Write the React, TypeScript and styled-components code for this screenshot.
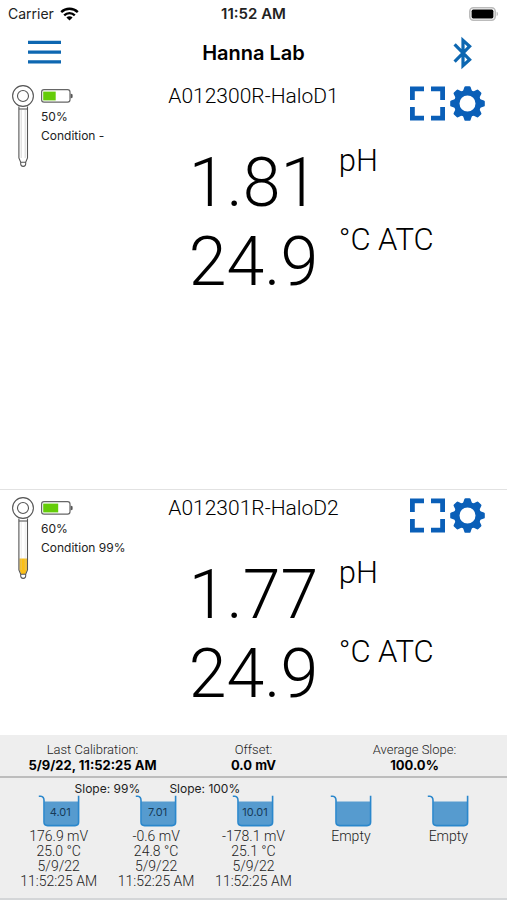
import React from "react";
import styled, { createGlobalStyle } from "styled-components";

const BLUE = "#0a5fb8";
const LIGHT_FONT = 'Roboto, "Liberation Sans", sans-serif';
const UI_FONT = 'Inter, "Liberation Sans", sans-serif';

const GlobalStyle = createGlobalStyle`
  *, *::before, *::after { box-sizing: border-box; }
  body {
    margin: 0;
    background: #fff;
    color: #000;
    font-family: ${UI_FONT};
  }
  p, h1, h2, dl, dd, dt, ul { margin: 0; padding: 0; }
`;

const Screen = styled.div`
  display: flex;
  flex-direction: column;
  min-height: 100vh;
`;

const Split = styled.div`
  display: grid;
  grid-template-columns: minmax(0, 1fr) auto minmax(0, 1fr);
  align-items: center;
`;

const StatusBar = styled(Split)`
  height: 28px;
  padding: 0 8px;
  font-size: 14px;
  line-height: 20px;
`;

const Carrier = styled.span`
  display: flex;
  align-items: center;
  gap: 6px;
  color: #222;
`;

const Clock = styled.span`
  font-size: 15px;
  font-weight: 600;
  color: #222;
`;

const AtEnd = styled.span`
  display: flex;
  justify-content: flex-end;
`;

const NavBar = styled(Split)`
  height: 50px;
  padding: 0 28px;
`;

const NavEnd = styled(AtEnd)`
  padding-right: 6px;
`;

const Title = styled.h1`
  font-size: 20px;
  line-height: 24px;
  font-weight: 600;
`;

const IconButton = styled.button`
  display: flex;
  padding: 0;
  border: 0;
  background: none;
  color: ${BLUE};
  cursor: pointer;
`;

const Device = styled.section<{ $divided?: boolean }>`
  flex: 1 1 0;
  display: flex;
  flex-direction: column;
  border-top: ${(p) => (p.$divided ? "1px solid #e2e2e2" : "0")};
`;

const DeviceBody = styled.div`
  flex: 1;
  display: grid;
  grid-template-columns: minmax(0, 1fr) minmax(170px, auto) minmax(0, 1fr);
  grid-template-rows: 66px 79px 79px;
  padding-top: 5px;
`;

const Info = styled.div`
  grid-column: 1;
  grid-row: 1 / span 3;
  display: flex;
  align-items: flex-start;
  gap: 7px;
  padding: 1px 0 0 12px;
`;

const InfoText = styled.div`
  display: flex;
  flex-direction: column;
  gap: 3px;
  padding-top: 5px;
  font-size: 12px;
  line-height: 16px;
  color: #222;
  white-space: nowrap;
  svg { margin-bottom: 3px; }
`;

const DeviceName = styled.h2`
  grid-column: 2;
  grid-row: 1;
  font-family: ${LIGHT_FONT};
  font-size: 21px;
  line-height: 26px;
  font-weight: 300;
  text-align: center;
`;

const Actions = styled.div`
  grid-column: 3;
  grid-row: 1;
  display: flex;
  justify-content: flex-end;
  align-items: flex-start;
  gap: 5px;
  padding: 3px 22px 0 0;
`;

const Value = styled.p<{ $row: number }>`
  grid-column: 2;
  grid-row: ${(p) => p.$row};
  font-family: ${LIGHT_FONT};
  font-size: 68px;
  line-height: 68px;
  font-weight: 300;
  text-align: center;
`;

const Unit = styled.p<{ $row: number }>`
  grid-column: 3;
  grid-row: ${(p) => p.$row};
  font-family: ${LIGHT_FONT};
  font-size: 31px;
  line-height: 24px;
  font-weight: 300;
  white-space: nowrap;
`;

const Calibration = styled.div`
  background: #eeeeee;
  border-bottom: 2px solid #d4d6d8;
  font-family: ${LIGHT_FONT};
  font-size: 14px;
  line-height: 15px;
  color: #222;
`;

const Summary = styled.dl`
  display: grid;
  grid-template-columns: repeat(3, 1fr);
  padding: 7px 12px 3px;
  border-bottom: 2px solid #bdbdbd;
  font-size: 13px;
  text-align: center;
  dt { font-weight: 300; }
  dd {
    font-family: ${UI_FONT};
    font-weight: 700;
    line-height: 16px;
    color: #000;
  }
`;

const Slopes = styled.div`
  display: grid;
  grid-template-columns: repeat(10, 1fr);
  height: 17px;
  padding: 3px 10px 0;
  font-family: ${UI_FONT};
  font-size: 12px;
  text-align: center;
  white-space: nowrap;
`;

const Slope = styled.span<{ $from: number }>`
  grid-column: ${(p) => p.$from} / span 2;
`;

const Buffers = styled.ul`
  display: grid;
  grid-template-columns: repeat(5, 1fr);
  min-height: 103px;
  padding: 0 10px;
  list-style: none;
`;

const Buffer = styled.li`
  display: flex;
  flex-direction: column;
  align-items: center;
  font-weight: 300;
  white-space: nowrap;
`;

const Beaker = styled.div`
  display: grid;
  place-items: center;
  margin-bottom: 2px;
  > * { grid-area: 1 / 1; }
`;

const BeakerLabel = styled.span`
  padding: 2px 0 0 3px;
  font-family: ${UI_FONT};
  font-size: 11px;
  font-weight: 400;
  color: #173a57;
`;

function WifiIcon() {
  return (
    <svg width="19" height="14" viewBox="0 0 19 14" fill="none" stroke="#000" aria-hidden="true">
      <path d="M1.2 5.2a11.8 11.8 0 0 1 16.6 0" strokeWidth="2.4" />
      <path d="M4.2 8.4a7.5 7.5 0 0 1 10.6 0" strokeWidth="2.3" />
      <path d="M9.5 13.6 6.4 10.5a4.4 4.4 0 0 1 6.2 0z" fill="#000" stroke="none" />
    </svg>
  );
}

function PhoneBattery() {
  return (
    <svg width="30" height="14" viewBox="0 0 30 14" aria-hidden="true">
      <rect x="0.8" y="0.8" width="25.4" height="12.4" rx="3.6" fill="#fff" stroke="#bbb" strokeWidth="1.6" />
      <rect x="2.6" y="2.6" width="21.8" height="8.8" rx="1.6" fill="#000" />
      <path d="M27.6 4.8c1.8.6 1.8 3.8 0 4.4z" fill="#bbb" />
    </svg>
  );
}

function MenuIcon() {
  return (
    <svg width="33" height="26" viewBox="0 0 33 26" fill="#0d67b1" aria-hidden="true">
      <path d="M0 .8h33v3.3H0zM0 10.4h33v3.3H0zM0 20.2h33v3.3H0z" />
    </svg>
  );
}

function BluetoothIcon() {
  return (
    <svg width="20" height="34" viewBox="0 0 20 34" fill="none" stroke="#0d67b1" strokeWidth="3.2" aria-hidden="true">
      <path d="M1.6 8.4 16.6 23.6 10 29.6V4.4l6.6 6L1.6 25.6" />
    </svg>
  );
}

function ExpandIcon() {
  return (
    <svg width="35" height="35" viewBox="0 0 35 35" fill="none" stroke={BLUE} strokeWidth="4.8" aria-hidden="true">
      <path d="M2.4 14V2.9H14M21 2.9h11.6V14M32.6 21v11.1H21M14 32.1H2.4V21" />
    </svg>
  );
}

function GearIcon() {
  return (
    <svg width="35" height="35" viewBox="-17.5 -17.5 35 35" fill={BLUE} aria-hidden="true">
      <circle r="10.8" fill="none" stroke={BLUE} strokeWidth="5.6" />
      {[0, 45, 90, 135, 180, 225, 270, 315].map((angle) => (
        <path
          key={angle}
          d="M-4.8-11.4-3.1-16.4Q-2.8-17.3-1.9-17.3H1.9Q2.8-17.3 3.1-16.4L4.8-11.4z"
          transform={`rotate(${angle})`}
        />
      ))}
    </svg>
  );
}

function ProbeIcon({ filled }: { filled?: boolean }) {
  return (
    <svg width="22" height="84" viewBox="0 0 22 84" fill="none" stroke="#555" strokeWidth="1.1" aria-hidden="true">
      {filled && <path d="M7.5 62.5h7.4V74L13.3 78H9.1L7.5 74z" fill="#fbbf16" stroke="none" />}
      <path d="M6.9 22.5V74l1.8 4.2h5L15.5 74V22.5" />
      <path d="M9.2 26V74M13.2 26V74" stroke="#ccc" strokeWidth=".8" opacity={filled ? 0.5 : 1} />
      <path d="M6.9 25h8.6" />
      <path d="M8.9 78.2c-1.8 5.6 6.4 5.6 4.6 0" />
      <circle cx="11" cy="12" r="10.4" fill="#fff" />
      <circle cx="11" cy="12" r="5.5" />
    </svg>
  );
}

function ProbeBattery({ level }: { level: number }) {
  return (
    <svg width="32" height="14" viewBox="0 0 32 14" aria-hidden="true">
      <rect x=".6" y=".6" width="28.4" height="12.6" rx="2.4" fill="#fff" stroke="#666" strokeWidth="1.2" />
      <rect x="2.2" y="2.6" width={(level * 25) / 100} height="8.8" fill="#64cc08" />
      <path d="M29.6 4.4 31.6 5.6V8.4L29.6 9.6z" fill="#555" />
    </svg>
  );
}

function BeakerIcon() {
  return (
    <svg width="42" height="32" viewBox="0 0 42 32" fill="none" aria-hidden="true">
      <path d="M6.2 6.5H40.4V27q0 3.6-3.6 3.6H9.8Q6.2 30.6 6.2 27z" fill="#569bcf" />
      <path
        d="M.8 1.2H2.8Q6 1.6 6 5.4V27q0 3.6 3.6 3.6H37q3.6 0 3.6-3.6V.8"
        stroke="#2a87cc"
        strokeWidth="1.6"
      />
    </svg>
  );
}

type BufferData = { label?: string; lines: string[] };

const BUFFERS: BufferData[] = [
  { label: "4.01", lines: ["176.9 mV", "25.0 °C", "5/9/22", "11:52:25 AM"] },
  { label: "7.01", lines: ["-0.6 mV", "24.8 °C", "5/9/22", "11:52:25 AM"] },
  { label: "10.01", lines: ["-178.1 mV", "25.1 °C", "5/9/22", "11:52:25 AM"] },
  { lines: ["Empty"] },
  { lines: ["Empty"] },
];

const SUMMARY = [
  ["Last Calibration:", "5/9/22, 11:52:25 AM"],
  ["Offset:", "0.0 mV"],
  ["Average Slope:", "100.0%"],
];

type DevicePanelProps = {
  name: string;
  battery: number;
  condition: string;
  ph: string;
  temperature: string;
  filled?: boolean;
  divided?: boolean;
  children?: React.ReactNode;
};

function DevicePanel(props: DevicePanelProps) {
  return (
    <Device $divided={props.divided}>
      <DeviceBody>
        <Info>
          <ProbeIcon filled={props.filled} />
          <InfoText>
            <ProbeBattery level={props.battery} />
            <p>{props.battery}%</p>
            <p>Condition {props.condition}</p>
          </InfoText>
        </Info>
        <DeviceName>{props.name}</DeviceName>
        <Actions>
          <IconButton aria-label={`Expand ${props.name}`}>
            <ExpandIcon />
          </IconButton>
          <IconButton aria-label={`Settings for ${props.name}`}>
            <GearIcon />
          </IconButton>
        </Actions>
        <Value $row={2}>{props.ph}</Value>
        <Unit $row={2}>pH</Unit>
        <Value $row={3}>{props.temperature}</Value>
        <Unit $row={3}>°C ATC</Unit>
      </DeviceBody>
      {props.children}
    </Device>
  );
}

export default function App() {
  return (
    <Screen>
      <GlobalStyle />
      <StatusBar>
        <Carrier>
          Carrier <WifiIcon />
        </Carrier>
        <Clock>11:52 AM</Clock>
        <AtEnd>
          <PhoneBattery />
        </AtEnd>
      </StatusBar>
      <NavBar as="header">
        <IconButton aria-label="Menu">
          <MenuIcon />
        </IconButton>
        <Title>Hanna Lab</Title>
        <NavEnd>
          <IconButton aria-label="Bluetooth">
            <BluetoothIcon />
          </IconButton>
        </NavEnd>
      </NavBar>
      <DevicePanel name="A012300R-HaloD1" battery={50} condition="-" ph="1.81" temperature="24.9" />
      <DevicePanel
        name="A012301R-HaloD2"
        battery={60}
        condition="99%"
        ph="1.77"
        temperature="24.9"
        filled
        divided
      >
        <Calibration>
          <Summary>
            {SUMMARY.map(([term, value]) => (
              <div key={term}>
                <dt>{term}</dt>
                <dd>{value}</dd>
              </div>
            ))}
          </Summary>
          <Slopes>
            <Slope $from={2}>Slope: 99%</Slope>
            <Slope $from={4}>Slope: 100%</Slope>
          </Slopes>
          <Buffers>
            {BUFFERS.map((buffer, i) => (
              <Buffer key={i}>
                <Beaker>
                  <BeakerIcon />
                  {buffer.label && <BeakerLabel>{buffer.label}</BeakerLabel>}
                </Beaker>
                {buffer.lines.map((line) => (
                  <span key={line}>{line}</span>
                ))}
              </Buffer>
            ))}
          </Buffers>
        </Calibration>
      </DevicePanel>
    </Screen>
  );
}
